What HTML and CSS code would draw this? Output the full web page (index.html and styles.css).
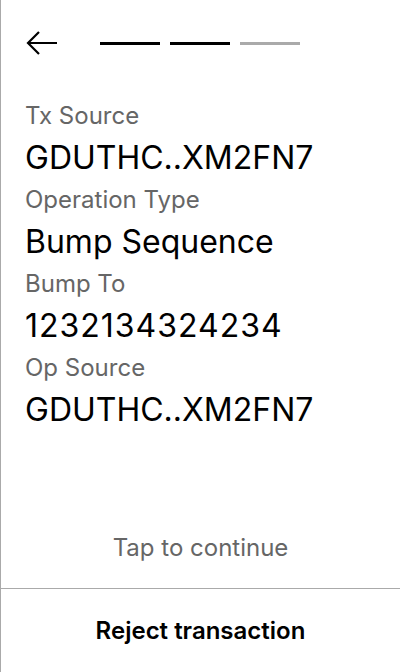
FILE: index.html
```html
<!DOCTYPE html>
<html>
<head>
<meta charset="utf-8">
<link rel="stylesheet" href="styles.css">
</head>
<body>
<div class="screen">
  <header class="top">
    <svg class="back" width="32" height="26" viewBox="0 0 32 26">
      <path d="M32 13H3M14 2L3 13L14 24" fill="none" stroke="#000" stroke-width="2.2"/>
    </svg>
    <div class="steps">
      <span class="step done"></span>
      <span class="step done"></span>
      <span class="step"></span>
    </div>
  </header>
  <main class="fields">
    <div class="label">Tx Source</div>
    <div class="value">GDUTHC..XM2FN7</div>
    <div class="label">Operation Type</div>
    <div class="value">Bump Sequence</div>
    <div class="label">Bump To</div>
    <div class="value num">1232134324234</div>
    <div class="label">Op Source</div>
    <div class="value">GDUTHC..XM2FN7</div>
  </main>
  <div class="tap">Tap to continue</div>
  <footer class="reject">Reject transaction</footer>
</div>
</body>
</html>
```
FILE: styles.css
```css
html, body {
  margin: 0;
  padding: 0;
  background: #fff;
}
.screen {
  width: 399px;
  height: 672px;
  border-left: 1px solid #aaa;
  display: flex;
  flex-direction: column;
  font-family: Inter, "Noto Sans", sans-serif;
  color: #000;
}
.top {
  display: flex;
  align-items: center;
  height: 26px;
  padding: 30px 0 0 24px;
}
.back {
  display: block;
}
.steps {
  display: flex;
  gap: 10px;
  margin-left: 43px;
}
.step {
  display: block;
  width: 60px;
  height: 3px;
  background: #aaa;
}
.step.done {
  background: #000;
}
.fields {
  padding: 42px 24px 0;
  flex: 1;
}
.label {
  font-size: 24px;
  line-height: 36px;
  color: #666;
}
.value {
  font-size: 32px;
  line-height: 48px;
  color: #000;
}
.value.num {
  letter-spacing: 1px;
}
.tap {
  text-align: center;
  font-size: 24px;
  color: #666;
  line-height: 30px;
  padding-bottom: 25px;
}
.reject {
  border-top: 1px solid #aaa;
  height: 83px;
  display: flex;
  align-items: center;
  justify-content: center;
  font-size: 24px;
  font-weight: 600;
}
```
